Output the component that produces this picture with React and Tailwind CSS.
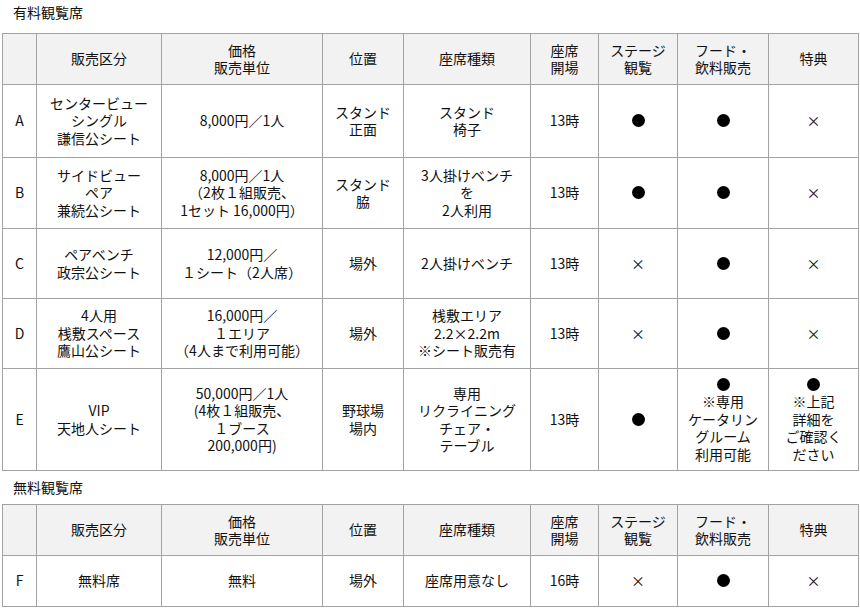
const Dot = () => (
  <span className="inline-block w-[13px] h-[13px] rounded-full bg-black align-[-1px]" />
)

const X = () => <span>×</span>

const widths = [34, 125, 161, 81, 127, 68, 79, 91, 90]

const header = [
  '',
  ['販売区分'],
  ['価格', '販売単位'],
  ['位置'],
  ['座席種類'],
  ['座席', '開場'],
  ['ステージ', '観覧'],
  ['フード・', '飲料販売'],
  ['特典'],
]

const paidRows = [
  {
    h: 'h-[73px]',
    cells: [
      ['A'],
      ['センタービュー', 'シングル', '謙信公シート'],
      ['8,000円／1人'],
      ['スタンド', '正面'],
      ['スタンド', '椅子'],
      ['13時'],
      [<Dot />],
      [<Dot />],
      [<X />],
    ],
  },
  {
    h: 'h-[71px]',
    cells: [
      ['B'],
      ['サイドビュー', 'ペア', '兼続公シート'],
      ['8,000円／1人', '（2枚１組販売、', '1セット 16,000円）'],
      ['スタンド', '脇'],
      ['3人掛けベンチ', 'を', '2人利用'],
      ['13時'],
      [<Dot />],
      [<Dot />],
      [<X />],
    ],
  },
  {
    h: 'h-[70px]',
    cells: [
      ['C'],
      ['ペアベンチ', '政宗公シート'],
      ['12,000円／', '１シート（2人席）'],
      ['場外'],
      ['2人掛けベンチ'],
      ['13時'],
      [<X />],
      [<Dot />],
      [<X />],
    ],
  },
  {
    h: 'h-[70px]',
    cells: [
      ['D'],
      ['4人用', '桟敷スペース', '鷹山公シート'],
      ['16,000円／', '１エリア', '（4人まで利用可能）'],
      ['場外'],
      ['桟敷エリア', '2.2×2.2m', '※シート販売有'],
      ['13時'],
      [<X />],
      [<Dot />],
      [<X />],
    ],
  },
  {
    h: 'h-[102px]',
    cells: [
      ['E'],
      ['VIP', '天地人シート'],
      ['50,000円／1人', '(4枚１組販売、', '１ブース', '200,000円)'],
      ['野球場', '場内'],
      ['専用', 'リクライニング', 'チェア・', 'テーブル'],
      ['13時'],
      [<Dot />],
      [<Dot />, '※専用', 'ケータリン', 'グルーム', '利用可能'],
      [<Dot />, '※上記', '詳細を', 'ご確認く', 'ださい'],
    ],
  },
]

const freeRows = [
  {
    h: 'h-[51px]',
    cells: [
      ['F'],
      ['無料席'],
      ['無料'],
      ['場外'],
      ['座席用意なし'],
      ['16時'],
      [<X />],
      [<Dot />],
      [<X />],
    ],
  },
]

const Lines = ({ lines }) => (
  <>
    {lines.map((l, i) => (
      <div key={i}>{l}</div>
    ))}
  </>
)

const SeatTable = ({ rows }) => (
  <table className="table-fixed w-[856px] border-collapse">
    <colgroup>
      {widths.map((w, i) => (
        <col key={i} style={{ width: w }} />
      ))}
    </colgroup>
    <thead>
      <tr className="h-[51px] bg-[#f2f2f2]">
        {header.map((h, i) => (
          <th key={i} className="border border-[#a3a3a3] font-normal text-center align-middle p-0">
            {h && <Lines lines={h} />}
          </th>
        ))}
      </tr>
    </thead>
    <tbody>
      {rows.map((r, i) => (
        <tr key={i} className={r.h}>
          {r.cells.map((c, j) => (
            <td key={j} className="border border-[#a3a3a3] text-center align-middle p-0">
              <Lines lines={c} />
            </td>
          ))}
        </tr>
      ))}
    </tbody>
  </table>
)

export default function App() {
  return (
    <div className="w-[860px] h-[608px] bg-white text-[#111] text-[14px] leading-[17.5px] font-['Noto_Sans_CJK_JP','Noto_Sans',sans-serif] pl-[2px]">
      <div className="h-[33px] pt-[4px] pl-[11px]">有料観覧席</div>
      <SeatTable rows={paidRows} />
      <div className="h-[33px] pt-[8px] pl-[11px]">無料観覧席</div>
      <SeatTable rows={freeRows} />
    </div>
  )
}
